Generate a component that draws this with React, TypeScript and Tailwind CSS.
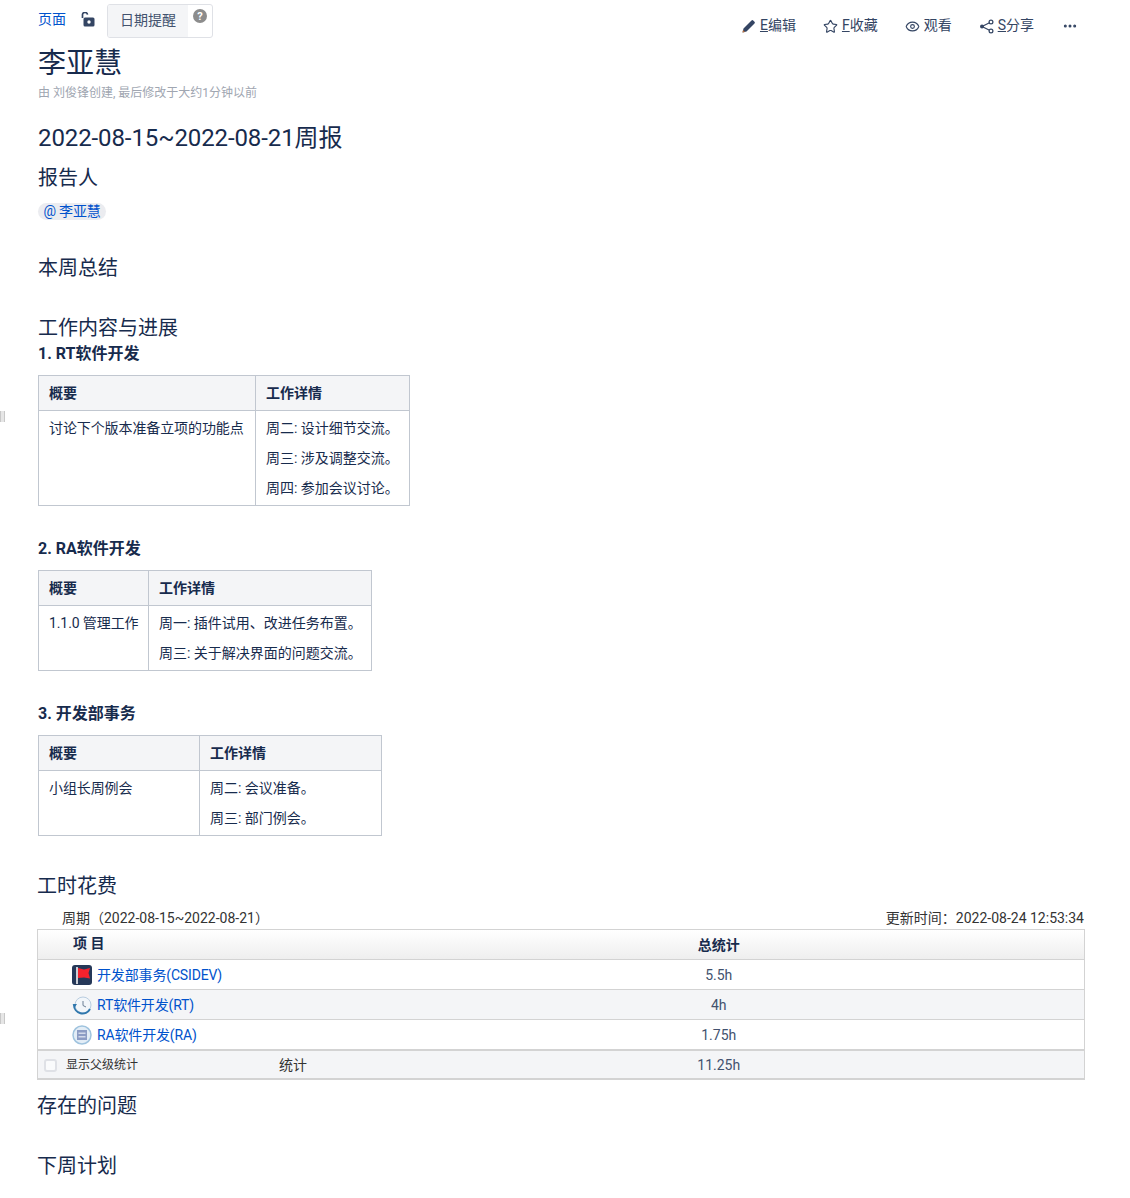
import { Ellipsis, Eye, Star } from "lucide-react";

const FONT = "font-['Roboto','Noto_Sans_CJK_SC',sans-serif]";

const tables = [
  {
    title: "1. RT软件开发",
    mt: "mt-0",
    col1: "w-[217px]",
    col2: "w-[154px]",
    width: "w-[371px]",
    summary: "讨论下个版本准备立项的功能点",
    details: ["周二: 设计细节交流。", "周三: 涉及调整交流。", "周四: 参加会议讨论。"],
  },
  {
    title: "2. RA软件开发",
    mt: "mt-[30px]",
    col1: "w-[110px]",
    col2: "w-[223px]",
    width: "w-[333px]",
    summary: "1.1.0 管理工作",
    details: ["周一: 插件试用、改进任务布置。", "周三: 关于解决界面的问题交流。"],
  },
  {
    title: "3. 开发部事务",
    mt: "mt-[30px]",
    col1: "w-[161px]",
    col2: "w-[182px]",
    width: "w-[343px]",
    summary: "小组长周例会",
    details: ["周二: 会议准备。", "周三: 部门例会。"],
  },
];

function FlagIcon() {
  return (
    <svg width="20" height="20" viewBox="0 0 20 20" className="shrink-0">
      <rect width="20" height="20" rx="3" fill="#253858" />
      <rect x="4" y="2" width="2" height="17" fill="#c9ced6" />
      <path d="M6 3 L12 4.5 L18 3 L16.5 8 L18 13.5 L12 12.5 L6 13 Z" fill="#f5222d" />
    </svg>
  );
}

function ClockIcon() {
  return (
    <svg width="20" height="20" viewBox="0 0 20 20" className="shrink-0">
      <circle cx="11" cy="10" r="8" fill="#f2f6fa" stroke="#b9cde0" strokeWidth="1" />
      <path d="M2 10 a8.5 8.5 0 0 0 16 4" fill="none" stroke="#2f77ad" strokeWidth="2" />
      <path d="M0.5 9 L5 9 L3 12 Z" fill="#2f77ad" />
      <path d="M11 6 V10.5 L14 12" fill="none" stroke="#6b7f94" strokeWidth="1" />
    </svg>
  );
}

function BoardIcon() {
  return (
    <svg width="20" height="20" viewBox="0 0 20 20" className="shrink-0">
      <circle cx="10" cy="10" r="9" fill="#e3edf6" stroke="#9fc3de" strokeWidth="1.5" />
      <rect x="5" y="5" width="10" height="10" fill="#8c9cc4" />
      <rect x="6.5" y="7.5" width="7" height="1.5" fill="#d3daea" />
      <rect x="6.5" y="11" width="7" height="1.5" fill="#d3daea" />
    </svg>
  );
}

function ShareIcon() {
  return (
    <svg width="15" height="15" viewBox="0 0 15 15" className="mt-0.5">
      <path d="M12 3 L3 7.5 L12 12" fill="none" stroke="#344563" strokeWidth="1.2" />
      <circle cx="12" cy="3" r="1.9" fill="#fff" stroke="#344563" strokeWidth="1.2" />
      <circle cx="3" cy="7.5" r="2" fill="#344563" />
      <circle cx="12" cy="12" r="1.9" fill="#fff" stroke="#344563" strokeWidth="1.2" />
    </svg>
  );
}

function SectionTitle({ children, className }: { children: string; className: string }) {
  return <h2 className={`h-7 text-[20px] leading-[30px] font-normal text-[#172b4d] ${className}`}>{children}</h2>;
}

function ReportTable({ t }: { t: (typeof tables)[number] }) {
  return (
    <>
      <h3 className={`${t.mt} h-6 text-[16px] leading-[26px] font-bold text-[#172b4d]`}>{t.title}</h3>
      <table className={`mt-2.5 ${t.width} table-fixed border-collapse text-[14px] leading-5 text-[#172b4d]`}>
        <thead>
          <tr className="bg-[#f4f5f7]">
            <th className={`${t.col1} h-[35px] border border-[#c1c7d0] px-2.5 text-left font-bold`}>概要</th>
            <th className={`${t.col2} h-[35px] border border-[#c1c7d0] px-2.5 text-left font-bold`}>工作详情</th>
          </tr>
        </thead>
        <tbody>
          <tr>
            <td className="border border-[#c1c7d0] px-2.5 py-[7px] align-top whitespace-nowrap tracking-[-0.1px]">{t.summary}</td>
            <td className="border border-[#c1c7d0] px-2.5 py-[7px] align-top">
              <div className="flex flex-col gap-2.5">
                {t.details.map((d) => (
                  <p key={d} className="whitespace-nowrap">{d}</p>
                ))}
              </div>
            </td>
          </tr>
        </tbody>
      </table>
    </>
  );
}

const timeRows = [
  { icon: <FlagIcon />, name: "开发部事务(CSIDEV)", hours: "5.5h", bg: "bg-white", pad: "pt-0" },
  { icon: <ClockIcon />, name: "RT软件开发(RT)", hours: "4h", bg: "bg-[#f4f5f7]", pad: "pt-0" },
  { icon: <BoardIcon />, name: "RA软件开发(RA)", hours: "1.75h", bg: "bg-white", pad: "pt-0.5" },
];

export default function App() {
  return (
    <div className={`relative min-h-[1198px] bg-white pt-1 pl-[38px] pr-[45px] text-[#172b4d] ${FONT}`}>
      <div className="absolute left-0 top-[411px] h-[11px] w-[5px] border-x border-[#c8c8c8] bg-[#e6e6e6]" />
      <div className="absolute left-0 top-[1013px] h-[11px] w-[5px] border-x border-[#c8c8c8] bg-[#e6e6e6]" />

      <div className="flex h-[34px] items-start justify-between">
        <div className="flex items-center">
          <a className="-mt-1 text-[14px] leading-[30px] text-[#0052cc]">页面</a>
          <svg width="14" height="15" viewBox="0 0 14 15" className="ml-[15px] mb-[3px]">
            <path d="M1.5 6 V3.2 a2.5 2.5 0 0 1 5 -0.6" fill="none" stroke="#344563" strokeWidth="1.7" />
            <rect x="2.5" y="5.5" width="11" height="9" rx="1.5" fill="#344563" />
            <circle cx="8" cy="10" r="1.7" fill="#fff" />
          </svg>
          <div className="ml-3 flex h-[34px] w-[106px] overflow-hidden rounded-[3px] border border-[#dfe1e6]">
            <span className="flex w-[80px] items-center justify-center bg-[#f4f5f7] pb-0.5 text-[14px] text-[#42526e]">日期提醒</span>
            <span className="flex flex-1 items-start justify-center pt-1">
              <span className="flex size-[14px] items-center justify-center rounded-full bg-[#8c8c8c] text-[11px] leading-none font-bold text-white">?</span>
            </span>
          </div>
        </div>
        <div className="mt-[11px] mr-[7px] flex items-center text-[14px] leading-5 text-[#344563]">
          <span className="flex items-center gap-1">
            <svg width="14" height="14" viewBox="0 0 14 14" className="mt-0.5">
              <path d="M0.5 13.5 L1.5 9.5 L9.5 1.5 a1.2 1.2 0 0 1 1.7 0 L12.5 2.8 a1.2 1.2 0 0 1 0 1.7 L4.5 12.5 Z" fill="#344563" />
              <path d="M0.5 13.5 L1 11 L3 13 Z" fill="#c0703a" />
            </svg>
            <span><span className="underline">E</span>编辑</span>
          </span>
          <span className="ml-[27px] flex items-center gap-1">
            <Star size={15} strokeWidth={1.8} className="mt-0.5" />
            <span><span className="underline">F</span>收藏</span>
          </span>
          <span className="ml-[27px] flex items-center gap-1">
            <Eye size={15} strokeWidth={1.8} className="mt-0.5" />
            <span>观看</span>
          </span>
          <span className="ml-[27px] flex items-center gap-1">
            <ShareIcon />
            <span><span className="underline">S</span>分享</span>
          </span>
          <Ellipsis size={16} strokeWidth={2.5} className="ml-[28px] mt-0.5" />
        </div>
      </div>

      <h1 className="mt-2 h-9 text-[28px] leading-9 font-normal">李亚慧</h1>
      <p className="mt-[3px] h-4 text-[12px] leading-4 text-[#a0a6b1]">由 刘俊锋创建, 最后修改于大约1分钟以前</p>
      <h2 className="mt-[21px] h-8 text-[24px] leading-8 font-normal tracking-[-0.1px]">2022-08-15~2022-08-21周报</h2>
      <SectionTitle className="mt-[9px]">报告人</SectionTitle>
      <div className="mt-3 flex h-[17px] w-[68px] items-center justify-center rounded-full bg-[#ebecf0] text-[14px] leading-[17px] tracking-[-0.2px] text-[#0052cc]">@ 李亚慧</div>
      <SectionTitle className="mt-[33px]">本周总结</SectionTitle>
      <SectionTitle className="mt-8">工作内容与进展</SectionTitle>

      {tables.map((t) => (
        <ReportTable key={t.title} t={t} />
      ))}

      <SectionTitle className="mt-[35px] -ml-px">工时花费</SectionTitle>
      <div className="mt-[9px] flex h-5 items-center justify-between pl-6 text-[14px] leading-5 text-[#333]">
        <span>周期（2022-08-15~2022-08-21）</span>
        <span className="mr-px">更新时间：2022-08-24 12:53:34</span>
      </div>
      <table className="-ml-px mt-px w-[1048px] table-fixed border-collapse text-[14px] leading-5">
        <thead>
          <tr className="h-[30px] bg-gradient-to-b from-white to-[#eeeeee] text-[#172b4d]">
            <th className="w-[316px] border-y border-l border-[#d3d3d3] pb-[3px] pl-[35px] text-left font-bold">项 目</th>
            <th className="border-y border-r border-[#d3d3d3] font-bold">总统计</th>
          </tr>
        </thead>
        <tbody>
          {timeRows.map((r) => (
            <tr key={r.name} className={`h-[30px] ${r.bg}`}>
              <td className={`border-y border-l border-[#d3d3d3] pl-[34px] ${r.pad}`}>
                <span className="flex items-center gap-[5px] tracking-[-0.15px] text-[#0052cc]">
                  {r.icon}
                  {r.name}
                </span>
              </td>
              <td className={`border-y border-r border-[#d3d3d3] text-center text-[#42526e] ${r.pad}`}>{r.hours}</td>
            </tr>
          ))}
          <tr className="h-[29px] border-y-2 border-x border-[#d3d3d3] bg-[#f4f5f7]">
            <td className="pl-1.5 pt-0.5">
              <div className="flex items-center">
                <span className="size-[13px] rounded-[3px] border-2 border-[#dfe1e6] bg-[#fafbfc]" />
                <span className="ml-[9px] text-[12px] text-[#333]">显示父级统计</span>
                <span className="ml-[141px] text-[#333]">统计</span>
              </div>
            </td>
            <td className="pt-0.5 text-center text-[#42526e]">11.25h</td>
          </tr>
        </tbody>
      </table>
      <SectionTitle className="mt-[11px] -ml-px">存在的问题</SectionTitle>
      <SectionTitle className="mt-8 -ml-px">下周计划</SectionTitle>
    </div>
  );
}
